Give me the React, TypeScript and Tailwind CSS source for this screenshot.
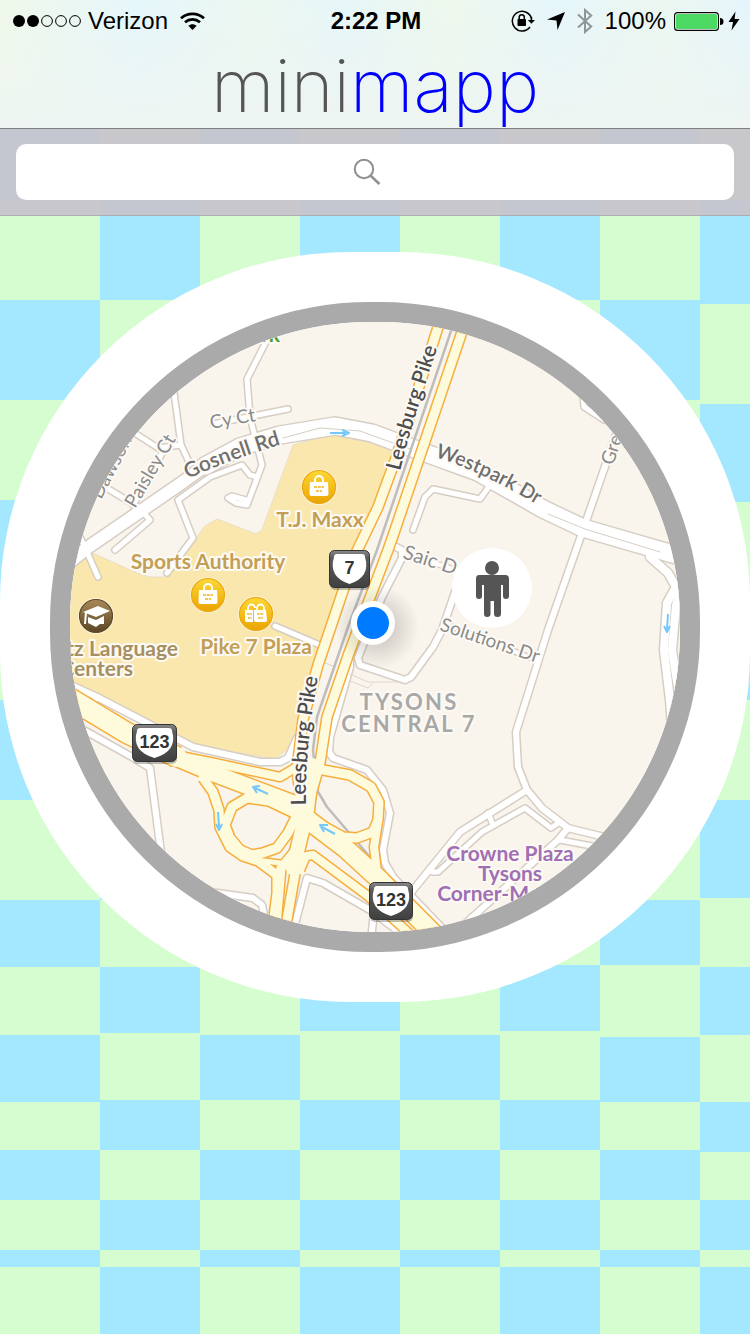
// Height of every tile, top to bottom, one list per column
const tileColumns = [
  ['h-[72px]', 'h-[100px]', 'h-[100px]', 'h-[100px]', 'h-[100px]', 'h-[100px]', 'h-[100px]', 'h-[100px]', 'h-[67px]', 'h-[68px]', 'h-[67px]', 'h-[48px]', 'h-[50px]', 'h-[50px]', 'h-[17px]', 'h-[67px]'],
  ['h-[72px]', 'h-[100px]', 'h-[100px]', 'h-[100px]', 'h-[100px]', 'h-[100px]', 'h-[100px]', 'h-[100px]', 'h-[67px]', 'h-[66px]', 'h-[67px]', 'h-[50px]', 'h-[50px]', 'h-[50px]', 'h-[17px]', 'h-[67px]'],
  ['h-[72px]', 'h-[100px]', 'h-[100px]', 'h-[100px]', 'h-[100px]', 'h-[100px]', 'h-[100px]', 'h-[100px]', 'h-[67px]', 'h-[68px]', 'h-[65px]', 'h-[50px]', 'h-[50px]', 'h-[50px]', 'h-[17px]', 'h-[67px]'],
  ['h-[72px]', 'h-[100px]', 'h-[100px]', 'h-[100px]', 'h-[100px]', 'h-[100px]', 'h-[100px]', 'h-[100px]', 'h-[65px]', 'h-[66px]', 'h-[69px]', 'h-[50px]', 'h-[50px]', 'h-[50px]', 'h-[17px]', 'h-[67px]'],
  ['h-[72px]', 'h-[100px]', 'h-[100px]', 'h-[100px]', 'h-[100px]', 'h-[100px]', 'h-[100px]', 'h-[100px]', 'h-[67px]', 'h-[68px]', 'h-[65px]', 'h-[50px]', 'h-[50px]', 'h-[50px]', 'h-[17px]', 'h-[67px]'],
  ['h-[72px]', 'h-[100px]', 'h-[100px]', 'h-[100px]', 'h-[100px]', 'h-[100px]', 'h-[100px]', 'h-[100px]', 'h-[65px]', 'h-[66px]', 'h-[69px]', 'h-[50px]', 'h-[50px]', 'h-[50px]', 'h-[17px]', 'h-[67px]'],
  ['h-[72px]', 'h-[100px]', 'h-[100px]', 'h-[100px]', 'h-[100px]', 'h-[100px]', 'h-[100px]', 'h-[100px]', 'h-[65px]', 'h-[72px]', 'h-[65px]', 'h-[48px]', 'h-[50px]', 'h-[50px]', 'h-[17px]', 'h-[67px]'],
  ['h-[72px]', 'h-[104px]', 'h-[100px]', 'h-[98px]', 'h-[98px]', 'h-[100px]', 'h-[100px]', 'h-[98px]', 'h-[69px]', 'h-[68px]', 'h-[67px]', 'h-[50px]', 'h-[48px]', 'h-[50px]', 'h-[17px]', 'h-[67px]'],
];

// [path, width]
const streets: [string, number][] = [
  ['M270 334 L247 379 L250 417 L262 465 L247 505 L236 503 L228 498 L232 496 L246 500', 5],
  ['M213 424 L288 409', 5],
  ['M257 477 L250 475 L242 465 L210 477 L178 500 L193 538 L167 573', 5],
  ['M173 385 L181 445 L190 464', 5],
  ['M130 430 L158 448 L181 445', 5],
  ['M165 448 L133 505', 5],
  ['M95 481 L138 507 L150 520 L115 550', 5],
  ['M76 530 L83 543 L98 577', 5],
  ['M413 530 L425 497 L433 489 L480 499 L488 488', 5],
  ['M628 400 L583 530 L548 630 L516 732 L518 767 L527 790 L542 808 L568 828 L600 836 L620 841', 6],
  ['M527 790 L460 832 L413 890 L400 908', 6],
  ['M560 822 L551 828 L525 808 L482 832 L438 872 L432 872 L430 868', 5],
  ['M488 813 L493 825', 5],
  ['M568 828 L558 840 L467 922', 6],
  ['M560 840 L592 846 L612 851', 5],
  ['M583 396 L584 407 L604 420', 5],
  ['M650 557 L668 573 L676 587 L667 603 L664 650 L670 700 L673 740', 8],
  ['M690 570 L676 605 L672 650 L680 700', 8],
  ['M392 545 L402 550 L402 558 L382 597 L358 658 L360 665 L405 680 L411 677 L433 647 L442 630 L455 592', 6],
  ['M402 552 L470 575', 4],
  ['M445 624 L536 660', 4],
  ['M350 655 L350 667 L330 737 L329 752 L333 758 L367 770 L383 790 L390 813 L383 850 L385 863 L393 877 L446 932', 6],
  ['M60 680 L97 697 L147 723 L193 747 L260 762 L280 762 L288 758 L297 738', 6],
  ['M97 697 L88 711', 6],
  ['M73 724 L132 757 L150 768 L162 860', 6],
  ['M210 892 L253 898 L262 905 L265 920', 6],
  ['M294 928 L307 878 L323 883 L370 910 L402 934', 6],
  ['M374 912 L371 940', 6],
  ['M275 626 L322 646', 5],
  ['M55 574 L87 548 L180 484 L205 466', 12],
  ['M205 466 L240 447 L280 435 L335 426 L372 433 L420 451 L478 472 L543 509 L583 528 L690 559', 17],
];

const medians = [
  'M283 438 L320 428 L360 431 L410 449',
  'M548 514 L585 529 L660 552',
];

const highways: [string, number][] = [
  ['M441 318 L396 458 L378 507 L357 551 L345 585 L318 665 L303 720 L297 768 L302 815', 9],
  ['M466 320 L422 450 L395 530 L388 550 L349 653 L327 717 L320 763 L308 805', 9],
  ['M312 765 L307 810 L293 868', 14],
  ['M296 850 L281 868 L276 925', 9],
  ['M297 862 L286 925', 9],
  ['M56 690 L127 733 L177 757', 20],
  ['M165 753 L215 763 L280 777 L300 765', 8],
  ['M165 753 L210 772 L300 806', 16],
  ['M292 812 L269 801 L247 798 L232 807 L225 825 L230 838 L240 850 L252 855 L263 853 L277 848 L288 833 L296 817', 9],
  ['M203 778 L213 792 L219 810 L220 827 L230 847 L243 856 L258 861 L277 875 L277 893 L274 917', 9],
  ['M256 860 L288 864', 5],
  ['M318 769 L350 775 L371 787 L379 802 L378 820 L373 832 L357 838 L343 837 L305 816', 9],
  ['M378 822 L374 847 L377 872 L390 890', 8],
  ['M300 814 L345 848 L380 880 L440 940', 18],
  ['M300 870 L306 856 L313 855 L368 896 L412 936', 8],
];

const flowArrows = [
  'M330 433 H346 M342 430 L349 433 L342 436',
  'M268 794 L255 788 M260 786 L253 787 L257 793',
  'M218 812 L219 827 M216 824 L219 830 L222 824',
  'M335 834 L322 827 M328 825 L320 825 L324 832',
  'M668 614 L667 629 M664 626 L667 632 L670 626',
];

type StreetName = { id: string; text: string; path: string; look: string };

const streetNames: StreetName[] = [
  { id: 'leesburg-n', text: 'Leesburg Pike', path: 'M400 471 Q412 422 444 328', look: 'fill-[#4d4d4d] text-[21px] font-semibold' },
  { id: 'leesburg-s', text: 'Leesburg Pike', path: 'M306 805 Q304 750 322 655', look: 'fill-[#4d4d4d] text-[21px] font-semibold' },
  { id: 'gosnell', text: 'Gosnell Rd', path: 'M188 479 Q230 459 300 439', look: 'fill-[#6e6e6e] text-[21px] font-semibold' },
  { id: 'westpark', text: 'Westpark Dr', path: 'M435 457 Q490 474 560 519', look: 'fill-[#6e6e6e] text-[20px] font-semibold' },
  { id: 'cy', text: 'Cy Ct', path: 'M211 429 L290 415', look: 'fill-[#8a8a8a] text-[19px]' },
  { id: 'paisley', text: 'Paisley Ct', path: 'M135 509 L188 419', look: 'fill-[#8a8a8a] text-[19px]' },
  { id: 'dawson', text: 'Dawson', path: 'M101 500 L141 423', look: 'fill-[#8a8a8a] text-[19px]' },
  { id: 'greensboro', text: 'Greensboro Dr', path: 'M613 466 L655 340', look: 'fill-[#8a8a8a] text-[19px]' },
  { id: 'saic', text: 'Saic Dr', path: 'M402 558 L490 586', look: 'fill-[#8a8a8a] text-[20px]' },
  { id: 'solutions', text: 'Solutions Dr', path: 'M439 630 L570 674', look: 'fill-[#8a8a8a] text-[19px]' },
];

const Tiles = () => (
  <div className="col-start-1 row-start-1 grid grid-cols-[repeat(7,2fr)_1fr]">
    {tileColumns.map((column, x) => (
      <div key={x} className="flex flex-col">
        {column.map((height, y) => (
          <div key={y} className={`${height} ${(x + y) % 2 === 0 ? 'bg-[#a4e8ff]' : 'bg-[#d5fdd0]'}`} />
        ))}
      </div>
    ))}
  </div>
);

const StatusBar = () => (
  <div className="grid h-[42px] grid-cols-[1fr_auto_1fr] items-center pl-3 pr-2.5 text-2xl text-black">
    <div className="flex items-center">
      <svg className="h-3 w-[70px]" viewBox="0 0 70 12" aria-label="Signal strength">
        <circle cx="7" cy="6" r="6" />
        <circle cx="21" cy="6" r="6" />
        <circle cx="35" cy="6" r="5.4" fill="none" stroke="#000" />
        <circle cx="49" cy="6" r="5.4" fill="none" stroke="#000" />
        <circle cx="63" cy="6" r="5.4" fill="none" stroke="#000" />
      </svg>
      <span className="ml-1.5">Verizon</span>
      <svg className="ml-3 h-[18px] w-[25px]" viewBox="0 0 25 18" fill="none" stroke="#000" strokeWidth="2.8" aria-label="Wi-Fi">
        <path d="M1 6.2 C7.5 0.4 17.5 0.4 24 6.2" />
        <path d="M5 10.2 C9.4 6.4 15.6 6.4 20 10.2" />
        <path d="M12.5 18 L8.3 13.8 C10.8 11.7 14.2 11.7 16.7 13.8 Z" fill="#000" stroke="none" />
      </svg>
    </div>
    <span className="font-bold">2:22 PM</span>
    <div className="flex items-center justify-end">
      <svg className="h-[22px] w-6" viewBox="0 0 24 22" aria-label="Rotation lock">
        <path d="M19 17 A9.8 9.8 0 1 1 20.4 8" fill="none" stroke="#000" strokeWidth="1.5" />
        <path d="M16.8 10 H24 L20.4 13.8 Z M19.6 7 L21.2 7 V11 H19.6 Z" />
        <rect x="6.5" y="9" width="8.5" height="7" rx="0.8" />
        <path d="M8.2 9.5 V7.3 A2.5 2.5 0 0 1 13.3 7.3 V9.5" fill="none" stroke="#000" strokeWidth="1.5" />
      </svg>
      <svg className="ml-3 h-[18px] w-[18px]" viewBox="0 0 18 18" aria-label="Location">
        <path d="M18 0 L10.5 18 L9.5 8.6 L0 7.5 Z" />
      </svg>
      <svg className="ml-3 h-[26px] w-4" viewBox="0 0 16 26" fill="none" stroke="#8f9796" strokeWidth="2" aria-label="Bluetooth">
        <path d="M1 6.5 L14.2 18.5 L8 24 V2 L14.2 7.5 L1 19.5" />
      </svg>
      <span className="ml-3">100%</span>
      <svg className="ml-2 h-[19px] w-[50px]" viewBox="0 0 50 19" aria-label="Battery full">
        <rect x="0.6" y="0.6" width="43.8" height="17.8" rx="3" fill="#fff" stroke="#000" strokeWidth="1.1" />
        <rect x="2" y="2" width="41" height="15" rx="1.5" fill="#4cd964" />
        <path d="M46 6 A3.5 3.5 0 0 1 46 13 Z" />
      </svg>
      <svg className="ml-1 h-5 w-3" viewBox="0 0 12 20" aria-label="Charging">
        <path d="M7.5 0.5 L0.5 11 H5 L3.5 19.5 L11.5 8 H6.6 Z" />
      </svg>
    </div>
  </div>
);

const Header = () => (
  <header className="h-32 bg-[linear-gradient(to_right,#f0f9e9,#e5f6fb_18%,#ebf7f0_34%,#e6f6f9_46%,#eef8ec_60%,#e5f6fb_74%,#ecf7f0_88%,#e4f5fc)]">
    <div className="h-full bg-linear-to-b from-transparent to-[#eef5f2]">
      <StatusBar />
      <h1 className="text-center font-[Inter,sans-serif] text-[73px]/[88px] font-extralight text-[#555]">
        mini<span className="text-[#0000ff]">mapp</span>
      </h1>
    </div>
  </header>
);

const SearchBar = () => (
  <form role="search" className="border-y border-t-[#7f8080] border-b-[#adaeb0] bg-[#c7c3cb]/92 px-4 py-[15px]">
    <label className="relative block">
      <input type="search" aria-label="Search" className="block h-14 w-full rounded-[10px] bg-white px-4 text-2xl outline-none" />
      <svg className="absolute inset-y-0 left-0 right-4 m-auto h-7 w-7" viewBox="0 0 28 28" fill="none" stroke="#8e8e93">
        <circle cx="11" cy="11" r="9.2" strokeWidth="2" />
        <path d="M17.6 17.6 L26.4 26" strokeWidth="2.6" />
      </svg>
    </label>
  </form>
);

const Bag = () => (
  <g>
    <path d="M-4 -5 V-7 A4 4 0 0 1 4 -7 V-5" fill="none" stroke="#fff" strokeWidth="2" />
    <path d="M-9 -5 H9 L9.5 7 Q9.5 9 7.5 9 H-7.5 Q-9.5 9 -9.5 7 Z" fill="#fff" />
    <path d="M-5 0 H5 M-3 4 H3" stroke="#f3c64d" strokeWidth="1.8" strokeDasharray="3 0.8" />
  </g>
);

const Coin = ({ x, y, kind }: { x: number; y: number; kind: 'bag' | 'bags' | 'school' }) => (
  <g transform={`translate(${x} ${y})`}>
    <circle r="18" fill="#fdf3d3" />
    <circle r="16.5" fill={kind === 'school' ? 'url(#brown)' : 'url(#gold)'} stroke={kind === 'school' ? '#5f4a2a' : '#eda512'} strokeWidth="1.2" />
    {kind === 'bag' && <Bag />}
    {kind === 'bags' && (
      <g>
        <path d="M-8 -4 V-6 A3.5 3.5 0 0 1 -1 -6 M1 -4 V-6 A3 3 0 0 1 8 -6 V-4" fill="none" stroke="#fff" strokeWidth="1.8" />
        <path d="M-11 -4 H-3 V8 H-9 Q-11 8 -11 6 Z M-2 -4 H10 L11 6 Q11 8 9 8 H0 Q-2 8 -2 6 Z" fill="#fff" />
        <path d="M-9 0 H-4 M-8 4 H-4 M1 0 H8 M2 4 H7" stroke="#f3c64d" strokeWidth="1.8" strokeDasharray="2.5 0.8" />
      </g>
    )}
    {kind === 'school' && (
      <g fill="#fff">
        <path d="M-13 -4 L2 -10 L14 -5 L0 1 Z" />
        <path d="M-8 1 L0 4 L8 0 V8 L0 5.5 V11 L-8 7 Z" />
        <path d="M-11 -4 L-12 8 L-10 8 L-9 -3 Z" />
        <path d="M0 5 L8 2 V8 L4 8 L0 11 Z" />
      </g>
    )}
  </g>
);

const RouteSign = ({ x, y, width, route }: { x: number; y: number; width: number; route: string }) => (
  <g transform={`translate(${x} ${y})`}>
    <rect x="1" y="2" width={width - 1} height="38" rx="5" fill="#000" opacity="0.25" />
    <rect x="0.5" y="0.5" width={width - 1} height="37" rx="5" fill="url(#plate)" stroke="#333" />
    <path
      d={`M8 4 H${width - 8} Q${width - 5} 4 ${width - 5} 7 Q${width + 1} 27 ${width / 2} 34 Q-1 27 5 7 Q5 4 8 4 Z`}
      fill="#fff"
    />
    <text x={width / 2} y="24" textAnchor="middle" className="fill-[#333] font-['Liberation_Sans',sans-serif] text-[18px] font-bold">
      {route}
    </text>
  </g>
);

const CityMap = () => (
  <svg viewBox="70 322 610 610" className="block w-full bg-[#f9f4ec] font-[Lato,sans-serif] text-[21px]" aria-label="Map of Tysons">
    <defs>
      <linearGradient id="gold" x2="0" y2="1">
        <stop offset="0" stopColor="#fdd835" />
        <stop offset="1" stopColor="#e9a400" />
      </linearGradient>
      <linearGradient id="brown" x2="0" y2="1">
        <stop offset="0" stopColor="#a98a58" />
        <stop offset="1" stopColor="#5a4526" />
      </linearGradient>
      <linearGradient id="plate" x2="0" y2="1">
        <stop offset="0" stopColor="#8a8a8a" />
        <stop offset="0.2" stopColor="#5c5c5c" />
        <stop offset="1" stopColor="#404040" />
      </linearGradient>
      <radialGradient id="glow">
        <stop offset="0.4" stopColor="#000" stopOpacity="0.14" />
        <stop offset="1" stopColor="#000" stopOpacity="0" />
      </radialGradient>
    </defs>

    {/* shopping district */}
    <path
      d="M293 445 L262 530 L256 534 L217 519 L205 526 L193 542 L165 577 L150 577 L137 573 L90 552 L60 575 V682 L140 720 L192 745 L275 759 L300 740 L318 665 L357 551 L396 450 L335 433 Z"
      fill="#fae7ae"
      stroke="#eadfc4"
    />

    <g fill="none" strokeLinejoin="round" strokeLinecap="round">
      {streets.map(([d, width]) => (
        <path key={d} d={d} stroke="#d6cec4" strokeWidth={width + 3} />
      ))}
      {streets.map(([d, width]) => (
        <path key={d} d={d} stroke="#fff" strokeWidth={width} />
      ))}
      {medians.map((d) => (
        <path key={d} d={d} stroke="#d6cec4" />
      ))}
      <path d="M325 663 L333 666 M350 674 L368 682 H400 M350 681 L368 688 L373 683" stroke="#ddd7cf" />
      <path
        d="M454 322 L377 550 L348 627 L317 717 L313 750 L317 790 L327 807 L370 857 L397 887"
        stroke="#bfbdbb"
        strokeWidth="2.5"
      />
      {highways.map(([d, width]) => (
        <path key={d} d={d} stroke="#f6ae3c" strokeWidth={width + 3} strokeLinecap="butt" />
      ))}
      {highways.map(([d, width]) => (
        <path key={d} d={d} stroke="#fdfbdb" strokeWidth={width} />
      ))}
      {flowArrows.map((d) => (
        <path key={d} d={d} stroke="#74c8fb" strokeWidth="2" strokeLinecap="butt" />
      ))}
    </g>

    <g className="stroke-[#fdfaf5] stroke-[4px] [paint-order:stroke]" strokeLinejoin="round">
      {streetNames.map(({ id, text, path, look }) => (
        <g key={id}>
          <path id={id} d={path} className="fill-none stroke-none" />
          <text className={look}>
            <textPath href={`#${id}`}>{text}</textPath>
          </text>
        </g>
      ))}
      <text x="280" y="342" textAnchor="end" className="fill-[#4f9a33] font-bold">Park</text>
      <g className="fill-[#c29f55] font-bold" textAnchor="middle">
        <text x="320" y="527">T.J. Maxx</text>
        <text x="208" y="569">Sports Authority</text>
        <text x="256" y="654">Pike 7 Plaza</text>
      </g>
      <g className="fill-[#a68f60] font-bold" textAnchor="end">
        <text x="178" y="656">Berlitz Language</text>
        <text x="133" y="676">Centers</text>
      </g>
      <g className="fill-[#a8a8a6] text-[22px] font-bold tracking-widest" textAnchor="middle">
        <text x="409" y="710">TYSONS</text>
        <text x="409" y="732">CENTRAL 7</text>
      </g>
      <g className="fill-[#9f70b3] font-bold" textAnchor="middle">
        <text x="510" y="861">Crowne Plaza</text>
        <text x="510" y="881">Tysons</text>
        <text x="510" y="901">Corner-McLean</text>
      </g>
    </g>

    <Coin x={319} y={487} kind="bag" />
    <Coin x={208} y={595} kind="bag" />
    <Coin x={256} y={614} kind="bags" />
    <Coin x={96} y={616} kind="school" />

    <RouteSign x={329} y={550} width={41} route="7" />
    <RouteSign x={132} y={724} width={45} route="123" />
    <RouteSign x={369} y={882} width={44} route="123" />

    {/* current location */}
    <circle cx="377" cy="627" r="42" fill="url(#glow)" />
    <circle cx="373" cy="623" r="22" fill="#fff" />
    <circle cx="373" cy="623" r="16" fill="#007aff" />

    {/* street view figure */}
    <circle cx="492" cy="588" r="40" fill="#fff" />
    <g fill="#555">
      <circle cx="492" cy="568" r="7" />
      <path d="M479 575 H505.500 Q509 575 509 579 V596 Q509 599 506 599 Q503 599 503 596 V585 H501 V614 Q501 617 497.500 617 Q494 617 494 614 V601 H490.500 V614 Q490.500 617 487 617 Q484 617 484 614 V585 H482 V596 Q482 599 479 599 Q476 599 476 596 V579 Q476 575 479 575 Z" />
    </g>
  </svg>
);

const App = () => {
  return (
    <div className="min-h-screen bg-white font-['Liberation_Sans',Arial,sans-serif]">
      <Header />
      <main className="grid grid-cols-1">
        <Tiles />
        <div className="col-start-1 row-start-1 flex flex-col gap-9">
          <SearchBar />
          <div className="mx-auto w-full max-w-[750px] rounded-[350px] bg-white p-[50px]">
            <div className="overflow-hidden rounded-[320px] border-20 border-[#aaa]">
              <CityMap />
            </div>
          </div>
        </div>
      </main>
    </div>
  );
};

export default App;
